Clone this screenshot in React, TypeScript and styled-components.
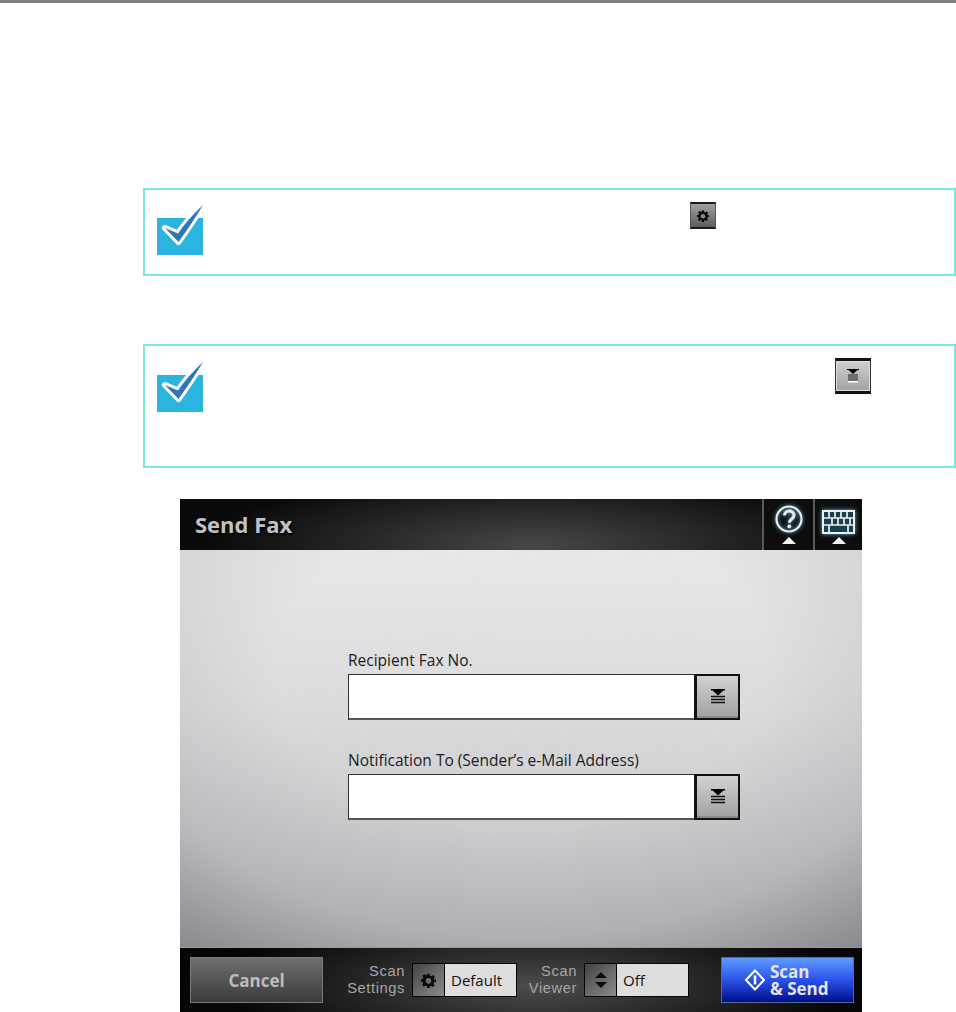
import React from 'react';
import styled, { createGlobalStyle } from 'styled-components';

const GlobalStyle = createGlobalStyle`
  html, body {
    margin: 0;
    padding: 0;
    background: #ffffff;
    font-family: 'Open Sans', 'Liberation Sans', sans-serif;
  }
  * { box-sizing: border-box; }
`;

const grain = encodeURIComponent(
  "<svg xmlns='http://www.w3.org/2000/svg' width='200' height='200'><filter id='n'><feTurbulence type='fractalNoise' baseFrequency='0.9' numOctaves='2' stitchTiles='stitch'/><feColorMatrix values='0 0 0 0 0.5 0 0 0 0 0.5 0 0 0 0 0.5 0 0 0 0.9 -0.3'/></filter><rect width='200' height='200' filter='url(#n)' opacity='0.22'/></svg>",
);

const TickIcon = ({ offset }: { offset: number }) => (
  <TickSvg viewBox="0 0 46 51" width="46" height="51" $offset={offset}>
    <rect x="0" y="14" width="46" height="37" fill="#2bb4e0" />
    <path d="M8 24 L21 29.500 Q30 16 46 1 Q36 18 21.500 38 Z" fill="#ffffff" stroke="#ffffff" strokeWidth="6" strokeLinejoin="round" />
    <path d="M8 24 L21 29.500 Q30 16 46 1 Q36 18 21.500 38 Z" fill="#2e75c0" />
  </TickSvg>
);

const GearIcon = ({ size, hole }: { size: number; hole: string }) => (
  <svg viewBox="0 0 24 24" width={size} height={size}>
    <path
      d="M10 1h4l.7 3.200 1.900.8 2.800-1.800 2.800 2.800-1.800 2.800.8 1.900L24 10v4l-3.200.7-.8 1.900 1.800 2.800-2.800 2.800-2.800-1.800-1.900.8L14 24h-4l-.7-3.200-1.900-.8-2.800 1.800-2.800-2.800 1.800-2.800-.8-1.900L0 14v-4l3.200-.7.8-1.900-1.800-2.800 2.800-2.800 2.800 1.800 1.900-.8z"
      fill="#0a0a0a"
    />
    <circle cx="12" cy="12.500" r="4.500" fill={hole} />
  </svg>
);

const ListIcon = () => (
  <svg viewBox="0 0 14 16" width="14" height="16">
    <path d="M0 0h14v1.500h-1.600L7 6.500 1.600 1.500H0z" fill="#000000" />
    <path d="M0 7.500h14M0 10.500h14M0 13.500h14" stroke="#111111" strokeWidth="1.300" />
  </svg>
);

const SmallListIcon = () => (
  <svg viewBox="0 0 12 14" width="12" height="14">
    <path d="M0 0h12v1h-1.500L6 5 1.500 1H0z" fill="#000000" />
    <rect x="1" y="5" width="10" height="7" fill="#6e6e6e" />
    <rect x="1" y="12" width="10" height="1.500" fill="#ffffff" />
  </svg>
);

const HelpIcon = () => (
  <GlowSvg viewBox="0 0 30 30" width="30" height="30">
    <circle cx="15" cy="15" r="12.500" fill="none" stroke="#e4eef2" strokeWidth="2.200" />
    <path d="M10.500 11.500c0-6 9.500-6 9.500-.2 0 3.700-4.600 3.700-4.600 7.400" fill="none" stroke="#e4eef2" strokeWidth="3" />
    <circle cx="15.300" cy="22.300" r="1.900" fill="#e4eef2" />
  </GlowSvg>
);

const KeyboardIcon = () => (
  <GlowSvg viewBox="0 0 33 24" width="33" height="24">
    <rect x="1" y="1" width="31" height="22" fill="#1a4050" stroke="#eaf2f5" strokeWidth="2" />
    <path d="M1 8h31M1 15h31M7 1v7M13 1v7M19 1v7M25 1v7M10 8v7M16 8v7M22 8v7M28 8v7M7 15v8M26 15v8" stroke="#eaf2f5" strokeWidth="1.700" />
  </GlowSvg>
);

const UpTriangle = () => (
  <svg viewBox="0 0 14 7" width="14" height="7">
    <path d="M7 0l7 7H0z" fill="#eef4f6" />
  </svg>
);

const UpDownIcon = () => (
  <svg viewBox="0 0 14 18" width="14" height="18">
    <path d="M7 1l6 6H1zM1 11h12l-6 6z" fill="#0a0a0a" />
  </svg>
);

const DiamondIcon = () => (
  <svg viewBox="0 0 20 22" width="20" height="22">
    <path d="M10 1.500L19 11 10 20.500 1 11z" fill="none" stroke="#ffffff" strokeWidth="2" />
    <path d="M10 6.500v9" stroke="#ffffff" strokeWidth="2.500" />
  </svg>
);

const Field = ({ label }: { label: string }) => (
  <FieldBlock>
    <FieldLabel>{label}</FieldLabel>
    <FieldRow>
      <FieldInput />
      <FieldButton type="button">
        <ListIcon />
      </FieldButton>
    </FieldRow>
  </FieldBlock>
);

const Selector = ({ lines, icon, value, gapAfter }: { lines: string[]; icon: React.ReactNode; value: string; gapAfter: number }) => (
  <SelectorGroup $gapAfter={gapAfter}>
    <SelectorLabel>
      {lines.map((line) => (
        <span key={line}>{line}</span>
      ))}
    </SelectorLabel>
    <SelectorBox>
      <SelectorIcon>{icon}</SelectorIcon>
      <SelectorValue>{value}</SelectorValue>
    </SelectorBox>
  </SelectorGroup>
);

export default function App() {
  return (
    <>
      <GlobalStyle />
      <Page>
        <TopRule />
        <FirstNote>
          <TickIcon offset={2} />
          <GearChip type="button">
            <GearIcon size={12} hole="#8a8a8a" />
          </GearChip>
        </FirstNote>
        <SecondNote>
          <TickIcon offset={3} />
          <ListChip type="button">
            <SmallListIcon />
          </ListChip>
        </SecondNote>
        <Panel>
          <Header>
            <Title>Send Fax</Title>
            <HeaderButton $width={51}>
              <HelpIcon />
              <UpTriangle />
            </HeaderButton>
            <HeaderButton $width={49}>
              <KeyboardIcon />
              <UpTriangle />
            </HeaderButton>
          </Header>
          <Body>
            <Field label="Recipient Fax No." />
            <Field label="Notification To (Sender’s e-Mail Address)" />
          </Body>
          <Footer>
            <CancelButton type="button">Cancel</CancelButton>
            <Selector lines={['Scan', 'Settings']} icon={<GearIcon size={15} hole="#6c6c6c" />} value="Default" gapAfter={0} />
            <Selector lines={['Scan', 'Viewer']} icon={<UpDownIcon />} value="Off" gapAfter={32} />
            <SendButton type="button">
              <DiamondIcon />
              <SendText>
                <span>Scan</span>
                <span>&amp; Send</span>
              </SendText>
            </SendButton>
          </Footer>
        </Panel>
      </Page>
    </>
  );
}

const Page = styled.div`
  width: 956px;
  height: 1012px;
  overflow: hidden;
  background: #ffffff;
`;

const TopRule = styled.div`
  height: 3px;
  background: #808080;
`;

const NoteBox = styled.div`
  margin-left: 143px;
  width: 813px;
  border: 2px solid #7fe8de;
  display: flex;
  align-items: flex-start;
  justify-content: space-between;
`;

const FirstNote = styled(NoteBox)`
  margin-top: 185px;
  height: 88px;
  padding: 12px 238px 0 12px;
`;

const SecondNote = styled(NoteBox)`
  margin-top: 68px;
  height: 124px;
  padding: 12px 83px 0 12px;
`;

const TickSvg = styled.svg<{ $offset: number }>`
  display: block;
  flex: none;
  margin-top: ${({ $offset }) => $offset}px;
`;

const GlowSvg = styled.svg`
  display: block;
  overflow: visible;
  filter: drop-shadow(0 0 2px #6fb6d0);
`;

const GearChip = styled.button`
  width: 26px;
  height: 27px;
  padding: 0;
  border: 1px solid #555555;
  border-top: 2px solid #1c1c1c;
  border-bottom: 2px solid #1c1c1c;
  background: linear-gradient(#a0a0a0, #5e5e5e);
  display: flex;
  align-items: center;
  justify-content: center;
`;

const ListChip = styled.button`
  width: 36px;
  height: 36px;
  padding: 0;
  border: 1px solid #333333;
  border-top: 3px solid #111111;
  border-bottom: 3px solid #111111;
  background: linear-gradient(#cfcfcf, #a2a2a2);
  box-shadow: inset 0 0 0 1px #dddddd;
  display: flex;
  align-items: center;
  justify-content: center;
`;

const Panel = styled.div`
  margin: 31px 0 0 180px;
  width: 682px;
  height: 513px;
  display: flex;
  flex-direction: column;
`;

const Header = styled.div`
  height: 51px;
  flex: none;
  display: flex;
  align-items: stretch;
  background: radial-gradient(ellipse 48% 140% at 52% 90%, #474747, #0a0a0a);
`;

const Title = styled.div`
  flex: 1;
  padding-left: 15px;
  font-size: 22px;
  font-weight: 700;
  line-height: 51px;
  color: #c2c2c2;
  text-shadow: 1px 2px 2px #000000;
`;

const HeaderButton = styled.div<{ $width: number }>`
  width: ${({ $width }) => $width}px;
  border-left: 2px solid #5a5a5a;
  background: #0d0d0d;
  display: flex;
  flex-direction: column;
  align-items: center;
  justify-content: flex-end;
  gap: 3px;
  padding-bottom: 6px;
`;

const Body = styled.div`
  flex: 1;
  padding: 103px 0 0 168px;
  display: flex;
  flex-direction: column;
  gap: 33px;
  background:
    url("data:image/svg+xml,${grain}"),
    radial-gradient(ellipse 80% 90% at 50% 30%, rgba(60, 60, 70, 0) 45%, rgba(60, 60, 70, 0.12) 75%, rgba(60, 60, 70, 0.42) 100%),
    linear-gradient(#e9e9eb 0%, #dcdcde 40%, #bdbdc1 100%);
`;

const FieldBlock = styled.div`
  width: 392px;
`;

const FieldLabel = styled.div`
  height: 21px;
  font-size: 15.500px;
  line-height: 15px;
  white-space: nowrap;
  color: #1c1c1c;
`;

const FieldRow = styled.div`
  height: 46px;
  display: flex;
`;

const FieldInput = styled.div`
  flex: 1;
  background: #ffffff;
  border: 1px solid #333333;
  border-right: none;
  border-bottom-width: 2px;
  border-bottom-color: #555555;
`;

const FieldButton = styled.button`
  width: 46px;
  padding: 0;
  border: 2px solid #111111;
  border-left-width: 3px;
  background: linear-gradient(#d2d2d2, #a0a0a0);
  box-shadow: inset 0 -2px 0 #8a8a8a;
  display: flex;
  align-items: center;
  justify-content: center;
`;

const Footer = styled.div`
  height: 65px;
  flex: none;
  display: flex;
  align-items: center;
  padding: 0 8px 0 10px;
  border-top: 1px solid #9a9a9a;
  background: radial-gradient(ellipse 46% 120% at 52% 60%, #4c4c4c, #060606);
`;

const CancelButton = styled.button`
  flex: none;
  width: 133px;
  height: 46px;
  margin-right: 22px;
  padding: 0;
  border: 1px solid #7b7b7b;
  background: linear-gradient(#6f6f6f, #3b3b3b);
  color: #bdbdbd;
  font-family: inherit;
  font-size: 17px;
  font-weight: 700;
`;

const SelectorGroup = styled.div<{ $gapAfter: number }>`
  flex: none;
  display: flex;
  align-items: center;
  gap: 7px;
  margin-right: ${({ $gapAfter }) => $gapAfter}px;
`;

const SelectorLabel = styled.div`
  width: 60px;
  display: flex;
  flex-direction: column;
  align-items: flex-end;
  font-family: 'Liberation Sans', sans-serif;
  font-size: 14.700px;
  letter-spacing: 0.6px;
  line-height: 17px;
  color: #a6a6a6;
`;

const SelectorBox = styled.div`
  width: 105px;
  height: 34px;
  display: flex;
  border: 1px solid #050505;
`;

const SelectorIcon = styled.div`
  width: 32px;
  border-right: 1px solid #050505;
  background: linear-gradient(135deg, #444444, #8c8c8c);
  display: flex;
  align-items: center;
  justify-content: center;
`;

const SelectorValue = styled.div`
  flex: 1;
  background: #dedede;
  padding-left: 6px;
  font-size: 15px;
  line-height: 32px;
  color: #111111;
`;

const SendButton = styled.button`
  flex: none;
  width: 133px;
  height: 46px;
  padding: 0 0 0 23px;
  border: 1px solid #5a6a8a;
  background: linear-gradient(#5f9cff 0%, #2a52e8 50%, #000e8c 100%);
  display: flex;
  align-items: center;
  gap: 5px;
`;

const SendText = styled.div`
  display: flex;
  flex-direction: column;
  align-items: flex-start;
  font-family: 'Open Sans', 'Liberation Sans', sans-serif;
  font-size: 17px;
  font-weight: 700;
  line-height: 17px;
  color: #e4e4e4;
`;
